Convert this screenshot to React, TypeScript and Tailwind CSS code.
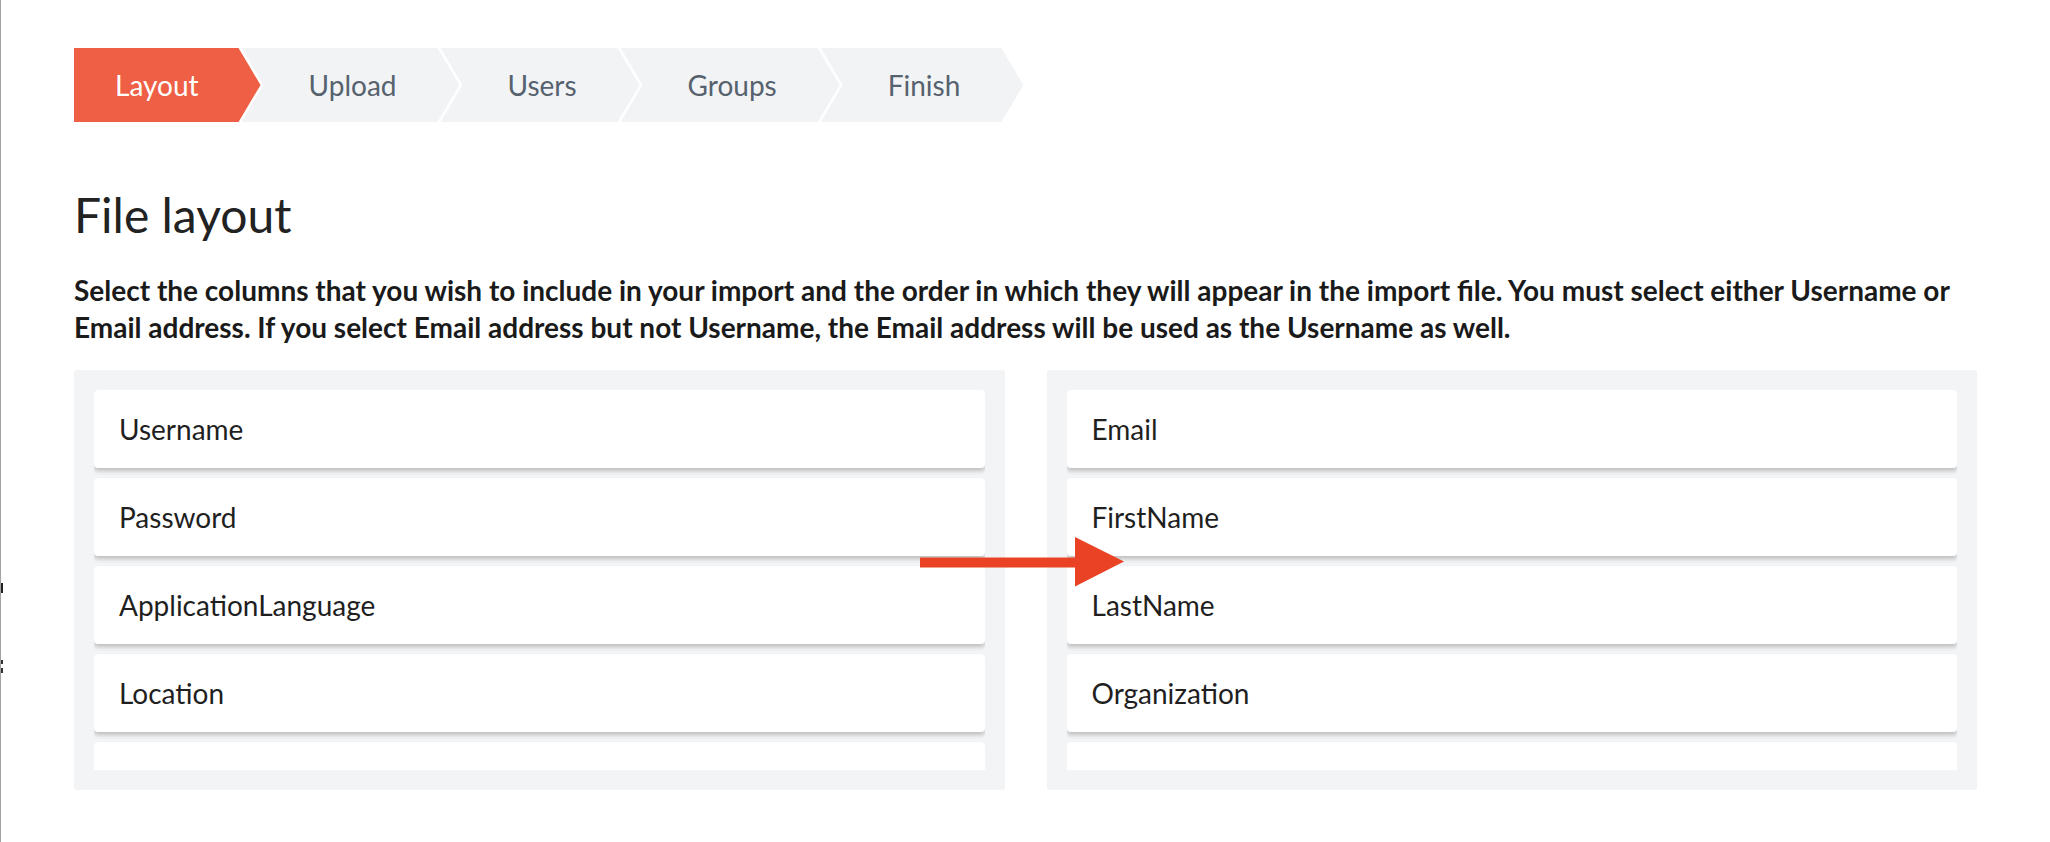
import React from 'react';

const steps = ['Layout', 'Upload', 'Users', 'Groups', 'Finish'];

// last entry of each list sits below the fold of the scroll box
const leftColumns = ['Username', 'Password', 'ApplicationLanguage', 'Location', ''];
const rightColumns = ['Email', 'FirstName', 'LastName', 'Organization', ''];

const Breadcrumb = () => (
  <div className="flex h-[74px]">
    {steps.map((step, i) =>
      i === 0 ? (
        <div
          key={step}
          className="flex h-full items-center bg-[#ee5f45] pl-[41px] pr-[62px] text-[28px] text-white [clip-path:polygon(0_0,calc(100%_-_22px)_0,100%_50%,calc(100%_-_22px)_100%,0_100%)]"
        >
          {step}
        </div>
      ) : (
        <div
          key={step}
          className="-ml-[19px] flex h-full items-center bg-[#f2f3f5] pl-[67px] pr-[63px] text-[28px] text-[#56626e] [clip-path:polygon(0_0,calc(100%_-_22px)_0,100%_50%,calc(100%_-_22px)_100%,0_100%,22px_50%)]"
        >
          {step}
        </div>
      )
    )}
  </div>
);

const ColumnList = ({ items }: { items: string[] }) => (
  <div className="rounded-[3px] bg-[#f3f4f6] p-[20px]">
    <div className="flex h-[380px] flex-col gap-[10px] overflow-hidden">
      {items.map((item, i) => (
        <div
          key={i}
          className="flex h-[78px] shrink-0 items-center rounded-[4px] bg-white pl-[25px] text-[28px] text-[#1f1f1f] shadow-[0_3px_4px_rgba(0,0,0,0.22)]"
        >
          {item}
        </div>
      ))}
    </div>
  </div>
);

export default function App() {
  return (
    <div className="relative h-[842px] w-full overflow-hidden border-l border-[#a3a3a3] bg-white font-['Lato',sans-serif]">
      {/* stray window edge marks */}
      <div className="absolute left-0 top-[583px] h-[10px] w-[2px] bg-[#222]" />
      <div className="absolute left-0 top-[660px] h-[4px] w-[2px] bg-[#333]" />
      <div className="absolute left-0 top-[668px] h-[5px] w-[2px] bg-[#333]" />

      <div className="px-[73px] pt-[48px]">
        <Breadcrumb />

        <h1 className="mt-[57px] text-[48px] font-normal text-[#222]">File layout</h1>

        <p className="mt-[21px] text-[28px] font-bold leading-[37px] text-[#1a1a1a]">
          Select the columns that you wish to include in your import and the order in which they will appear in the import file. You must select either Username or Email address. If you select Email address but not Username, the Email address will be used as the Username as well.
        </p>

        <div className="mt-[24px] grid grid-cols-2 gap-[42px]">
          <ColumnList items={leftColumns} />
          <ColumnList items={rightColumns} />
        </div>
      </div>

      {/* annotation arrow */}
      <svg className="absolute left-[919px] top-[537px]" width="205" height="50" viewBox="0 0 205 50">
        <rect x="0" y="20.5" width="157" height="10" fill="#ea4224" />
        <polygon points="155,0 204,24.5 155,49.5" fill="#ea4224" />
      </svg>
    </div>
  );
}
